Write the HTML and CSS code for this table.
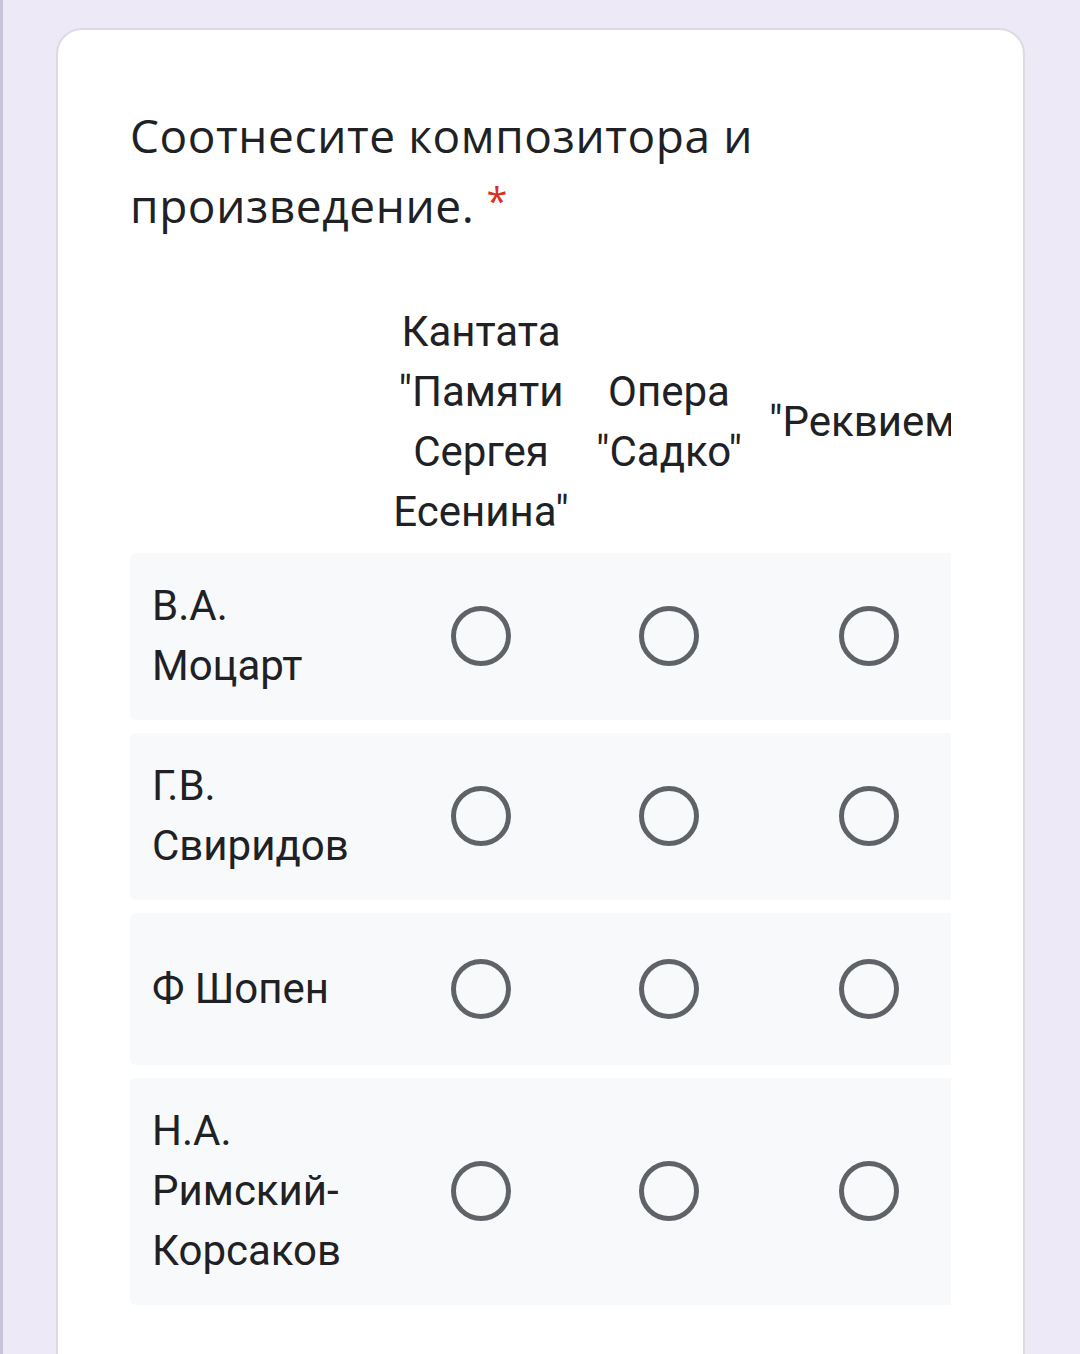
FILE: index.html
```html
<!DOCTYPE html>
<html lang="ru">
<head>
<meta charset="utf-8">
<link rel="stylesheet" href="styles.css">
</head>
<body>
<div class="page">
  <div class="card">
    <div class="title">Соотнесите композитора и произведение.<span class="req">*</span></div>
    <div class="grid-wrap">
      <div class="grid">
        <div class="row head">
          <div class="label"></div>
          <div class="col-head">Кантата "Памяти Сергея Есенина"</div>
          <div class="col-head">Опера "Садко"</div>
          <div class="col-head nowrap">"Реквием"</div>
        </div>
        <div class="row item">
          <div class="label">В.А. Моцарт</div>
          <div class="cell"><span class="radio"></span></div>
          <div class="cell"><span class="radio"></span></div>
          <div class="cell"><span class="radio"></span></div>
        </div>
        <div class="row item">
          <div class="label">Г.В. Свиридов</div>
          <div class="cell"><span class="radio"></span></div>
          <div class="cell"><span class="radio"></span></div>
          <div class="cell"><span class="radio"></span></div>
        </div>
        <div class="row item">
          <div class="label">Ф Шопен</div>
          <div class="cell"><span class="radio"></span></div>
          <div class="cell"><span class="radio"></span></div>
          <div class="cell"><span class="radio"></span></div>
        </div>
        <div class="row item">
          <div class="label">Н.А. Римский-Корсаков</div>
          <div class="cell"><span class="radio"></span></div>
          <div class="cell"><span class="radio"></span></div>
          <div class="cell"><span class="radio"></span></div>
        </div>
      </div>
    </div>
  </div>
</div>
</body>
</html>
```
FILE: styles.css
```css
html, body {
  margin: 0;
  padding: 0;
  background: #ede9f7;
}
.page {
  box-sizing: border-box;
  height: 1354px;
  border-left: 3px solid #c8c3d6;
  padding: 28px 55px 0 53px;
  overflow: hidden;
}
.card {
  box-sizing: border-box;
  background: #ffffff;
  border: 2px solid #dcdbe2;
  border-radius: 26px;
  padding: 70px 20px 60px 72px;
  min-height: 1400px;
  color: #202124;
}
.title {
  font-family: "Open Sans", "Noto Sans", sans-serif;
  font-size: 46px;
  letter-spacing: 0.6px;
  line-height: 70px;
  width: 700px;
  color: #202124;
}
.req {
  color: #d93025;
  margin-left: 12px;
  font-size: 38px;
  position: relative;
  top: -8px;
}
.grid-wrap {
  margin-top: 59px;
  width: 821px;
  overflow: hidden;
}
.grid {
  width: 845px;
  font-family: Roboto, "Noto Sans", sans-serif;
  font-size: 42px;
  line-height: 60px;
}
.row {
  display: grid;
  grid-template-columns: 257px 188px 188px 212px;
  align-items: center;
}
.head {
  margin-bottom: 11px;
}
.col-head {
  text-align: center;
  padding: 0 2px;
}
.nowrap {
  white-space: nowrap;
}
.item {
  background: #f8f9fa;
  border-radius: 6px;
  margin-bottom: 13px;
  padding: 23px 0 24px;
}
.label {
  padding: 0 20px 0 22px;
}
.cell {
  height: 105px;
  display: flex;
  align-items: center;
  justify-content: center;
}
.radio {
  box-sizing: border-box;
  width: 60px;
  height: 60px;
  border: 5px solid #5f6368;
  border-radius: 50%;
}
```
